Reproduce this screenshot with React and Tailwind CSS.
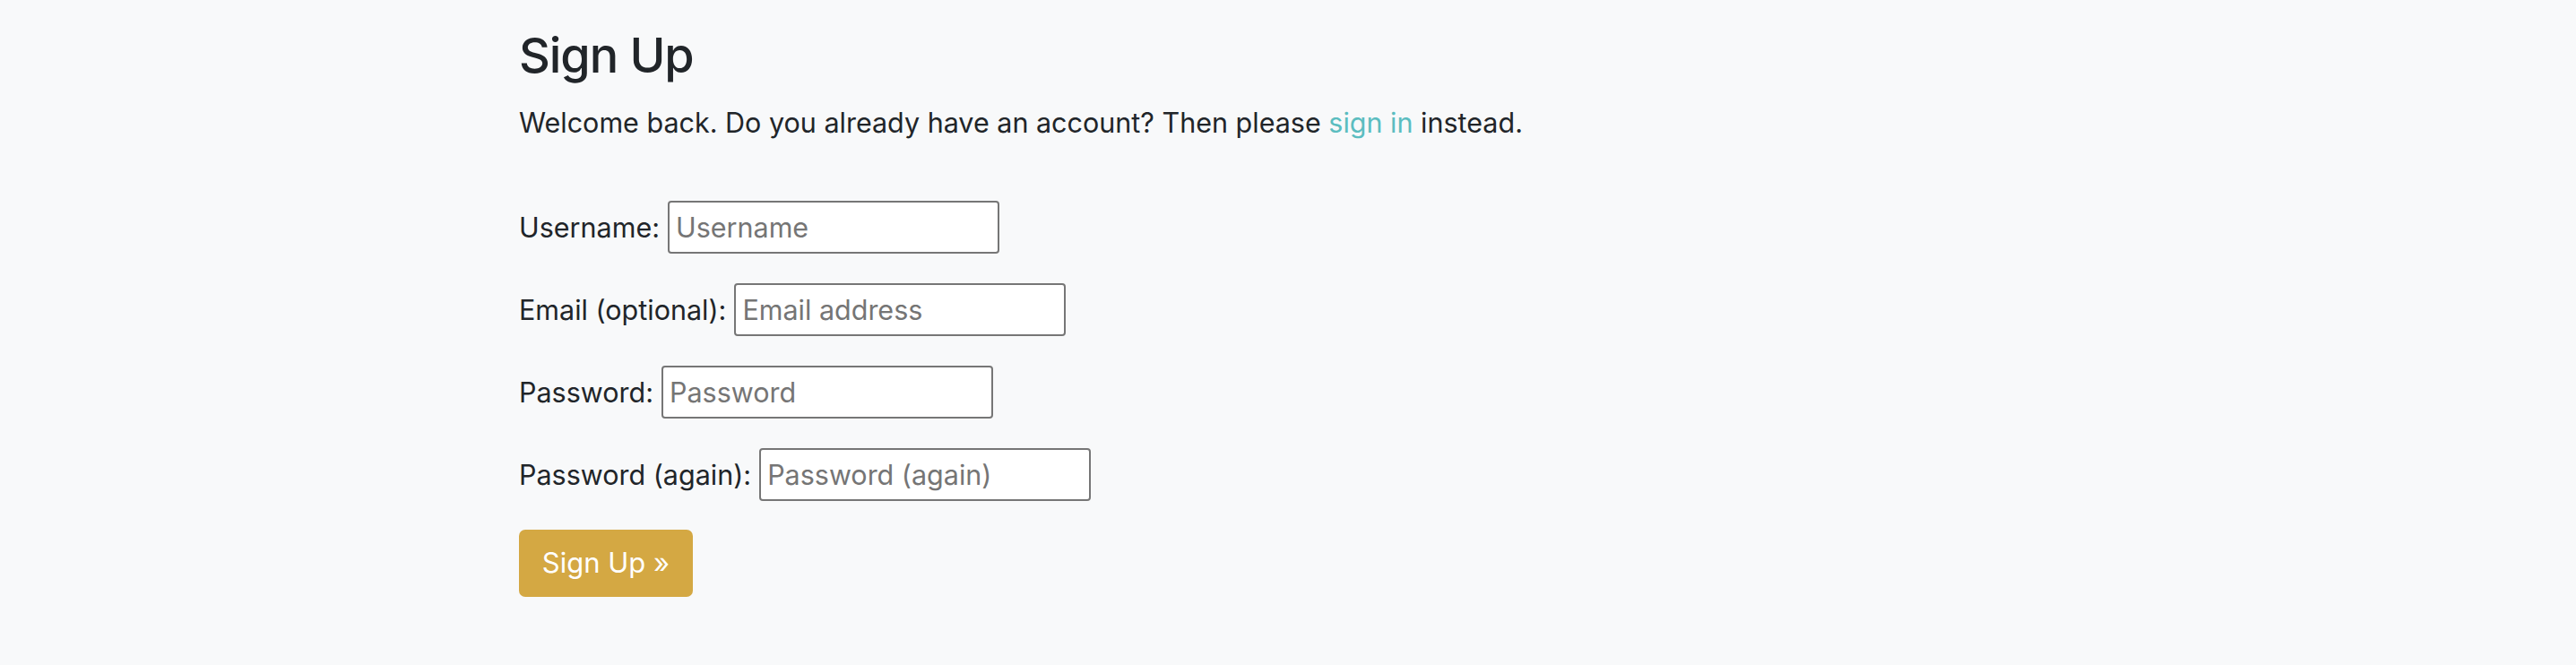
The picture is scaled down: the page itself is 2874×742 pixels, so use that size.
export default function App() {
  const rows = [
    { label: "Username:", placeholder: "Username", type: "text" },
    { label: "Email (optional):", placeholder: "Email address", type: "email" },
    { label: "Password:", placeholder: "Password", type: "password" },
    { label: "Password (again):", placeholder: "Password (again)", type: "password" },
  ];
  return (
    <div className="min-h-screen bg-[#f8f9fa] text-[#212529] font-['Inter','Liberation_Sans',sans-serif]">
      <div className="pl-[579px] pt-[28px]">
        <h2 className="text-[54px] leading-[67px] font-medium tracking-[-0.02em] m-0">Sign Up</h2>
        <p className="mt-[19px] text-[30.5px] leading-[45px]">
          Welcome back. Do you already have an account? Then please{" "}
          <a href="#" className="text-[#5bbdc0]">sign in</a> instead.
        </p>
        <form className="mt-[65px] flex flex-col items-start gap-[33px]">
          {rows.map((r) => (
            <div key={r.label} className="flex items-center h-[59px] text-[30.5px]">
              <label className="mr-[9px]">{r.label}</label>
              <input
                type={r.type}
                placeholder={r.placeholder}
                className="w-[370px] h-[59px] bg-white border-2 border-[#767676] rounded-[4px] px-[7px] text-[30.5px] placeholder:text-[#757575] outline-none"
              />
            </div>
          ))}
          <button
            type="button"
            className="-mt-px w-[194px] h-[75px] bg-[#d4a843] text-white text-[31px] rounded-[7px]"
          >
            Sign Up »
          </button>
        </form>
      </div>
    </div>
  );
}
